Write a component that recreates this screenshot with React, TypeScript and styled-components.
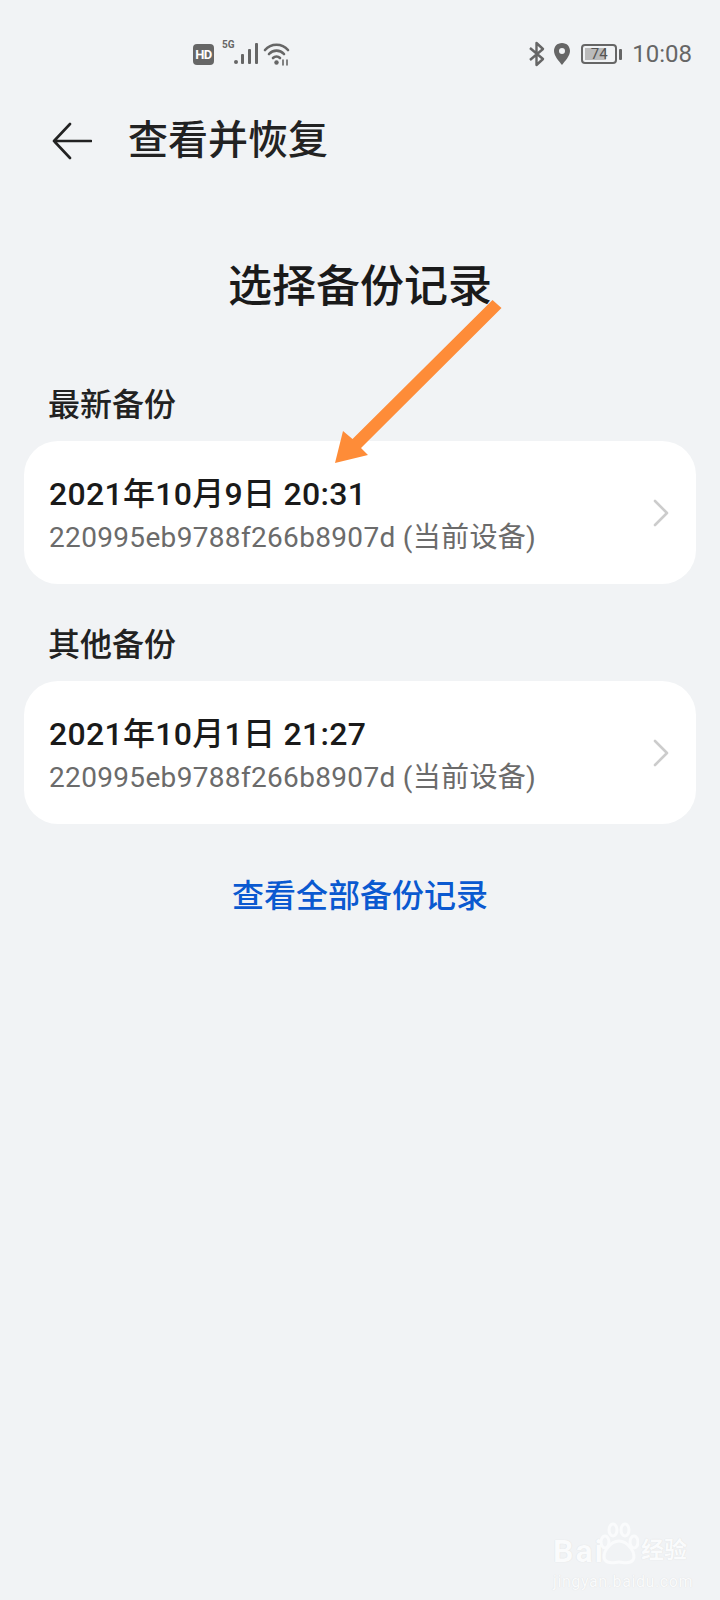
import styled, { createGlobalStyle } from "styled-components";

const GlobalStyle = createGlobalStyle`
  html, body {
    margin: 0;
    padding: 0;
    background: #f1f3f5;
  }
`;

const backups = [
  { label: "最新备份", time: "2021年10月9日 20:31" },
  { label: "其他备份", time: "2021年10月1日 21:27" },
];

const App = (): JSX.Element => {
  return (
    <Page>
      <GlobalStyle />
      <StatusBar>
        <StatusCenter>
          <HdBadge>HD</HdBadge>
          <SignalWrap>
            <FiveG>5G</FiveG>
            <svg width="26" height="22" viewBox="0 0 26 22" fill="#666">
              <circle cx="3" cy="19" r="2" />
              <rect x="8" y="11" width="3" height="10" rx="1" />
              <rect x="15" y="6" width="3" height="15" rx="1" />
              <rect x="22" y="0" width="3" height="21" rx="1" />
            </svg>
          </SignalWrap>
          <svg width="28" height="24" viewBox="0 0 28 24" fill="none" stroke="#666" strokeWidth="2.600" strokeLinecap="round">
            <path d="M2 8 C8 1 19 1 25 8" />
            <path d="M6 12 C10 7.500 17 7.500 21 12" />
            <path d="M10 16 C12 14 15 14 17 16" />
            <circle cx="13.500" cy="20.500" r="2.200" fill="#666" stroke="none" />
            <path d="M20 23 V18 M24 18 V23" strokeWidth="1.600" />
          </svg>
        </StatusCenter>
        <StatusRight>
          <svg width="18" height="26" viewBox="0 0 18 26" fill="none" stroke="#666" strokeWidth="2.400" strokeLinejoin="round">
            <path d="M2 7 L15 18 L8.500 24 V2 L15 8 L2 19" />
          </svg>
          <svg width="18" height="24" viewBox="0 0 18 24" fill="#666">
            <path fillRule="evenodd" d="M9 1 C4 1 1 4.600 1 9 C1 14 6 19 9 23 C12 19 17 14 17 9 C17 4.600 14 1 9 1 Z M9 6 A3 3 0 1 1 9 12 A3 3 0 1 1 9 6 Z" />
          </svg>
          <Battery>
            <BatteryBody>
              <BatteryFill />
              <BatteryText>74</BatteryText>
            </BatteryBody>
            <BatteryCap />
          </Battery>
          <Clock>10:08</Clock>
        </StatusRight>
      </StatusBar>

      <Header>
        <svg width="40" height="38" viewBox="0 0 40 38" fill="none" stroke="#222" strokeWidth="2.600" strokeLinecap="round" strokeLinejoin="round">
          <path d="M18 2 L2 19 L18 36 M2 19 H39" />
        </svg>
        <HeaderTitle>查看并恢复</HeaderTitle>
      </Header>

      <MainTitle>选择备份记录</MainTitle>

      {backups.map((item) => (
        <Section key={item.label}>
          <SectionLabel>{item.label}</SectionLabel>
          <Card>
            <CardText>
              <CardTime>{item.time}</CardTime>
              <CardDevice>220995eb9788f266b8907d (当前设备)</CardDevice>
            </CardText>
            <svg width="18" height="28" viewBox="0 0 18 28" fill="none" stroke="#ccc" strokeWidth="2.600" strokeLinecap="round" strokeLinejoin="round">
              <path d="M3 2 L15 14 L3 26" />
            </svg>
          </Card>
        </Section>
      ))}

      <ViewAll>查看全部备份记录</ViewAll>

      <Annotation width="170" height="170" viewBox="0 0 170 170">
        <path d="M156.500 0 L165.500 8 L25 148 L32 155 L-1 163 L7 131 L16.500 139 Z" fill="#fe8c38" />
      </Annotation>

      <Watermark>
        <WatermarkLogo>
          <WatermarkBrand>Bai</WatermarkBrand>
          <svg width="40" height="44" viewBox="0 0 40 44" fill="none" stroke="#fafbfc" strokeWidth="3">
            <ellipse cx="6" cy="20" rx="4" ry="6" />
            <ellipse cx="14" cy="8" rx="4" ry="6" />
            <ellipse cx="26" cy="8" rx="4" ry="6" />
            <ellipse cx="35" cy="20" rx="4" ry="6" />
            <path d="M20 19 C28 19 38 31 34 38 C30 43 24 40 20 40 C16 40 10 43 6 38 C2 31 12 19 20 19 Z" />
          </svg>
          <WatermarkName>经验</WatermarkName>
        </WatermarkLogo>
        <WatermarkUrl>jingyan.baidu.com</WatermarkUrl>
      </Watermark>
    </Page>
  );
};

export default App;

const FONT = `"Roboto", "Noto Sans CJK SC", sans-serif`;

const Page = styled.div`
  position: relative;
  width: 720px;
  height: 1600px;
  overflow: hidden;
  background: #f1f3f5;
  font-family: ${FONT};
`;

const StatusBar = styled.div`
  height: 56px;
  padding: 26px 28px 0 193px;
  display: flex;
  justify-content: space-between;
  align-items: center;
`;

const StatusCenter = styled.div`
  display: flex;
  align-items: center;
  gap: 4px;
`;

const HdBadge = styled.div`
  width: 21px;
  height: 21px;
  border-radius: 4px;
  background: #666;
  color: #fff;
  font-size: 13px;
  font-weight: 700;
  letter-spacing: -0.5px;
  display: flex;
  align-items: center;
  justify-content: center;
`;

const SignalWrap = styled.div`
  position: relative;
  display: flex;
  padding-left: 15px;
`;

const FiveG = styled.span`
  position: absolute;
  left: 4px;
  top: -4px;
  font-size: 10px;
  font-weight: 700;
  color: #666;
`;

const StatusRight = styled.div`
  display: flex;
  align-items: center;
  gap: 7px;
`;

const Battery = styled.div`
  display: flex;
  align-items: center;
  gap: 2px;
  margin-left: 3px;
`;

const BatteryBody = styled.div`
  position: relative;
  width: 36px;
  height: 20px;
  border: 2px solid #666;
  border-radius: 4px;
  box-sizing: border-box;
  padding: 2px;
`;

const BatteryFill = styled.div`
  width: 74%;
  height: 100%;
  background: #bbb;
`;

const BatteryText = styled.span`
  position: absolute;
  inset: 0;
  display: flex;
  align-items: center;
  justify-content: center;
  font-size: 15px;
  color: #555;
`;

const BatteryCap = styled.div`
  width: 3px;
  height: 11px;
  border-radius: 1px;
  background: #666;
`;

const Clock = styled.span`
  font-size: 24px;
  color: #666;
  margin-left: 3px;
`;

const Header = styled.div`
  height: 56px;
  margin-top: 31px;
  padding-left: 52px;
  display: flex;
  align-items: center;
  gap: 36px;
`;

const HeaderTitle = styled.h1`
  margin: 0;
  font-size: 40px;
  font-weight: 500;
  line-height: 56px;
  color: #222;
`;

const MainTitle = styled.h2`
  margin: 87px 0 0;
  text-align: center;
  font-size: 44px;
  font-weight: 500;
  line-height: 62px;
  color: #1a1a1a;
`;

const Section = styled.section`
  margin-top: 65px;
  padding: 0 24px;

  & + & {
    margin-top: 39px;
  }
`;

const SectionLabel = styled.div`
  padding-left: 24px;
  font-size: 32px;
  font-weight: 500;
  line-height: 44px;
  color: #222;
`;

const Card = styled.div`
  margin-top: 14px;
  height: 143px;
  padding: 0 26px 0 25px;
  box-sizing: border-box;
  background: #fff;
  border-radius: 34px;
  display: flex;
  align-items: center;
  justify-content: space-between;
`;

const CardText = styled.div`
  display: flex;
  flex-direction: column;
  padding-top: 6px;
`;

const CardTime = styled.div`
  font-size: 32px;
  font-weight: 500;
  line-height: 44px;
  letter-spacing: 0.3px;
  color: #1a1a1a;
`;

const CardDevice = styled.div`
  font-size: 28px;
  line-height: 44px;
  letter-spacing: 0.33px;
  color: #6b6b6b;
`;

const ViewAll = styled.div`
  margin-top: 50px;
  text-align: center;
  font-size: 32px;
  font-weight: 500;
  line-height: 44px;
  color: #0a59d0;
`;

const Annotation = styled.svg`
  position: absolute;
  left: 336px;
  top: 300px;
  overflow: visible;
`;

const Watermark = styled.div`
  position: absolute;
  left: 553px;
  top: 1522px;
  width: 160px;
  color: #fafbfc;
  text-shadow: 0 0 1px #d8d8d8;

  svg {
    flex-shrink: 0;
  }
`;

const WatermarkLogo = styled.div`
  display: flex;
  align-items: flex-end;
  height: 44px;
  white-space: nowrap;
`;

const WatermarkBrand = styled.span`
  font-size: 32px;
  font-weight: 700;
  line-height: 30px;
  letter-spacing: 2px;
  margin-right: -6px;
`;

const WatermarkName = styled.span`
  font-size: 23px;
  font-weight: 700;
  line-height: 30px;
  margin-left: 2px;
`;

const WatermarkUrl = styled.div`
  margin-top: 6px;
  font-size: 16px;
  line-height: 20px;
  letter-spacing: 0.6px;
  white-space: nowrap;
`;
